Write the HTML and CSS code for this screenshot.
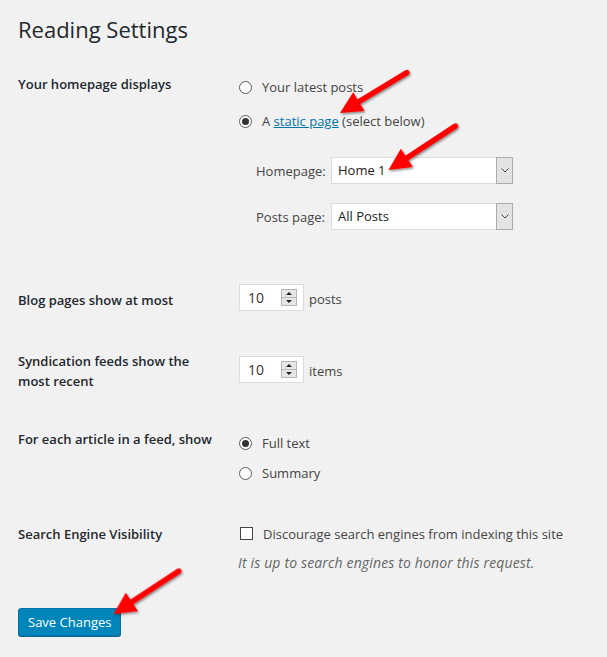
FILE: index.html
```html
<!DOCTYPE html>
<html lang="en">
<head>
<meta charset="utf-8">
<title>Reading Settings</title>
<link rel="stylesheet" href="styles.css">
</head>
<body>
<div class="wrap">
  <h1>Reading Settings</h1>

  <div class="row row-home">
    <div class="th">Your homepage displays</div>
    <div class="td">
      <div class="opt"><span class="radio"></span><span>Your latest posts</span></div>
      <div class="opt opt-next"><span class="radio checked"></span><span>A <a href="#">static page</a> (select below)</span></div>
      <div class="pages">
        <span class="plabel">Homepage:</span>
        <span class="select"><span class="sval">Home 1</span><span class="dd"><svg width="8" height="5" viewBox="0 0 8 5"><polyline points="0.5,0.5 4,4 7.5,0.5" fill="none" stroke="#444" stroke-width="1"/></svg></span></span>
        <span class="plabel">Posts page:</span>
        <span class="select"><span class="sval">All Posts</span><span class="dd"><svg width="8" height="5" viewBox="0 0 8 5"><polyline points="0.5,0.5 4,4 7.5,0.5" fill="none" stroke="#444" stroke-width="1"/></svg></span></span>
      </div>
    </div>
  </div>

  <div class="row row-blog">
    <div class="th">Blog pages show at most</div>
    <div class="td inline">
      <span class="num"><span class="nval">10</span><span class="spin"><span class="up"></span><span class="down"></span></span></span>
      <span class="unit">posts</span>
    </div>
  </div>

  <div class="row row-feed">
    <div class="th">Syndication feeds show the most recent</div>
    <div class="td inline">
      <span class="num"><span class="nval">10</span><span class="spin"><span class="up"></span><span class="down"></span></span></span>
      <span class="unit">items</span>
    </div>
  </div>

  <div class="row row-article">
    <div class="th">For each article in a feed, show</div>
    <div class="td">
      <div class="opt"><span class="radio checked"></span><span>Full text</span></div>
      <div class="opt opt-sum"><span class="radio"></span><span>Summary</span></div>
    </div>
  </div>

  <div class="row row-search">
    <div class="th">Search Engine Visibility</div>
    <div class="td">
      <div class="opt"><span class="check"></span><span>Discourage search engines from indexing this site</span></div>
      <p class="desc">It is up to search engines to honor this request.</p>
    </div>
  </div>

  <button class="save" type="button">Save Changes</button>
</div>

<svg class="arrows" width="607" height="657" viewBox="0 0 607 657" aria-hidden="true">
  <defs>
    <filter id="sh" x="-20%" y="-20%" width="140%" height="140%">
      <feDropShadow dx="1" dy="1.5" stdDeviation="1" flood-color="#000" flood-opacity="0.45"/>
    </filter>
  </defs>
  <g filter="url(#sh)" fill="#ff0000" stroke="#ff0000">
    <g transform="translate(340 113) rotate(-31.1)">
      <line x1="16" y1="0" x2="78" y2="0" stroke-width="5.5" stroke-linecap="round"/>
      <polygon points="0,0 22,-11 22,11" stroke="none"/>
    </g>
    <g transform="translate(388.5 170) rotate(-33.3)">
      <line x1="16" y1="0" x2="80" y2="0" stroke-width="5.5" stroke-linecap="round"/>
      <polygon points="0,0 22,-11 22,11" stroke="none"/>
    </g>
    <g transform="translate(113.5 614) rotate(-33.3)">
      <line x1="16" y1="0" x2="78" y2="0" stroke-width="5.5" stroke-linecap="round"/>
      <polygon points="0,0 22,-11 22,11" stroke="none"/>
    </g>
  </g>
</svg>
</body>
</html>
```

FILE: styles.css
```css
* { box-sizing: border-box; }
html, body { margin: 0; padding: 0; }
body {
  position: relative;
  width: 607px;
  height: 657px;
  overflow: hidden;
  background: #f1f1f1;
  color: #444;
  font-family: "Open Sans", "Noto Sans", sans-serif;
  font-size: 13px;
  line-height: 20px;
}
.wrap { padding: 0 18px; }
h1 {
  margin: 15px 0 0;
  font-size: 22px;
  line-height: 29px;
  font-weight: 400;
  color: #23282d;
}
.row { display: flex; align-items: flex-start; }
.th { width: 221px; flex: none; padding-right: 21px; font-weight: 600; color: #23282d; }
.td { flex: 1; }
.inline { display: flex; align-items: center; }

.row-home { margin-top: 30px; }
.row-home .td { padding-top: 3px; }
.opt { display: flex; align-items: flex-start; }
.opt-next { margin-top: 14px; }
.radio {
  flex: none;
  width: 13px; height: 13px;
  margin: 4px 10px 0 0;
  border: 1px solid #5a5a5a;
  border-radius: 50%;
  background: #fff;
  display: flex; align-items: center; justify-content: center;
}
.radio.checked::after {
  content: "";
  width: 7px; height: 7px;
  border-radius: 50%;
  background: #333;
}
a { color: #0073aa; text-decoration: underline; }

.pages {
  margin: 26px 0 0 17px;
  display: grid;
  grid-template-columns: 75px 182px;
  row-gap: 19px;
  align-items: center;
}
.plabel { color: #444; }
.select {
  display: flex;
  height: 27px;
  background: #fff;
  border: 1px solid #dcdcdc;
  color: #222;
}
.sval { flex: 1; padding-left: 6px; line-height: 25px; }
.dd {
  flex: none;
  width: 17px;
  margin: -1px -1px -1px 0;
  border: 1px solid #ababab;
  background: #e3e3e3;
  display: flex; align-items: center; justify-content: center;
}

.row-blog { margin-top: 54px; }
.row-blog .th { padding-top: 6px; }
.num {
  display: flex;
  align-items: center;
  width: 65px; height: 27px;
  background: #fff;
  border: 1px solid #dcdcdc;
  padding: 0 6px 0 8px;
  font-size: 14px;
  color: #333;
}
.nval { flex: 1; }
.spin {
  flex: none;
  display: flex; flex-direction: column;
  width: 16px; height: 17px;
  border: 1px solid #b5b5b5;
  background: #e6e6e6;
}
.spin span { flex: 1; display: flex; align-items: center; justify-content: center; }
.spin .up { border-bottom: 1px solid #b5b5b5; }
.spin .up::after {
  content: ""; border-left: 3px solid transparent; border-right: 3px solid transparent;
  border-bottom: 3px solid #222;
}
.spin .down::after {
  content: ""; border-left: 3px solid transparent; border-right: 3px solid transparent;
  border-top: 3px solid #222;
}
.unit { margin-left: 5px; padding-top: 2px; }

.row-feed { margin-top: 40px; }
.row-feed .td { padding-top: 5px; }

.row-article { margin-top: 38px; }
.row-article .td { padding-top: 4px; }
.opt-sum { margin-top: 10px; }

.row-search { margin-top: 41px; }
.check {
  flex: none;
  width: 13px; height: 13px;
  margin: 3px 10px 0 1px;
  border: 1px solid #444;
  background: #fff;
}
.desc {
  margin: 9px 0 0 -1px;
  font-size: 14px;
  letter-spacing: 0.15px;
  font-style: italic;
  color: #666;
}

.save {
  display: block;
  margin-top: 35px;
  height: 28px;
  padding: 0 9px;
  font-family: inherit;
  font-size: 13px;
  line-height: 26px;
  color: #fff;
  background: #0085ba;
  border: 1px solid #0073aa;
  border-radius: 3px;
  box-shadow: 0 1px 0 #006799;
}

.arrows { position: absolute; top: 0; left: 0; pointer-events: none; }
```
